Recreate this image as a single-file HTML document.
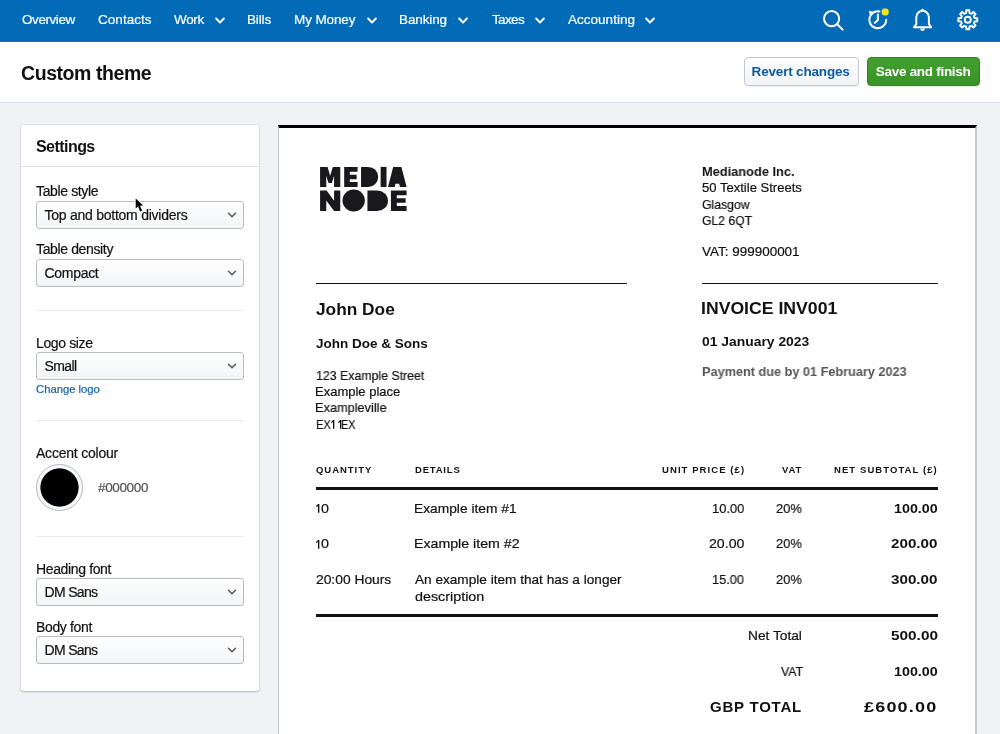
<!DOCTYPE html>
<html lang="en">
<head>
<meta charset="utf-8">
<title>Custom theme</title>
<style>
*{box-sizing:border-box;margin:0;padding:0}
html,body{width:1000px;height:734px;overflow:hidden}
body{font-family:"Liberation Sans",sans-serif;background:#f0f2f6;color:#111;position:relative;-webkit-font-smoothing:antialiased}
.abs{position:absolute;white-space:nowrap}
/* nav */
#nav{position:absolute;left:0;top:0;width:1000px;height:42.7px;background:#026bb7;border-bottom:1.3px solid #0b3e66;box-shadow:inset 0 -1px 0 #0672c2}
#nav .it{position:absolute;font-size:13.5px;line-height:16px;color:#fff;white-space:nowrap}
#nav svg{position:absolute}
/* header */
#hdr{position:absolute;left:0;top:42px;width:1000px;height:61px;background:#fff;border-bottom:1px solid #dcdfe4}
#title{left:20.5px;top:61px;font-size:19.5px;line-height:24px;font-weight:bold;color:#111;letter-spacing:-0.43px}
.btn{position:absolute;top:57px;height:28.5px;border-radius:4px;font-size:13.5px;font-weight:bold;line-height:27.5px;white-space:nowrap}
#revert{left:744.3px;width:115.4px;background:linear-gradient(#fdfdfe,#f3f4f7);border:1px solid #c3c7ce;color:#0d5a9b;letter-spacing:-0.18px;padding-left:6.6px;box-shadow:0 1px 1px rgba(0,0,0,.06)}
#save{left:867px;width:112.6px;background:linear-gradient(#429f2f,#3a9428);border:1px solid #328223;color:#fff;letter-spacing:-0.29px;padding-left:7.8px;box-shadow:0 1px 1px rgba(0,0,0,.08)}
/* settings */
#panel{position:absolute;left:21px;top:125px;width:238px;height:566px;background:#fff;border-radius:2px;box-shadow:0 1px 2px rgba(0,0,0,.22),0 0 0 1px rgba(0,0,0,.04)}
#panel h2{position:absolute;left:15px;top:11.5px;font-size:16px;line-height:20px;font-weight:bold;color:#111;letter-spacing:-0.55px}
#panel .hd{position:absolute;left:0;top:41px;width:238px;height:1px;background:#dfe1e5}
.lbl{position:absolute;left:15px;font-size:14px;line-height:16px;color:#111;white-space:nowrap;letter-spacing:-0.36px}
.sel{position:absolute;left:15px;width:208px;height:28px;border:1px solid #b9bcc2;border-radius:3px;background:linear-gradient(#fff,#f3f4f6);font-size:14px;line-height:26px;padding-left:7.5px;color:#111;white-space:nowrap;letter-spacing:-0.3px}
.sel svg{position:absolute;right:6.3px;top:10px}
.hr{position:absolute;left:15px;width:208px;height:1px;background:#e6e8eb}
#swatch{position:absolute;left:15.1px;top:339.1px;width:46.6px;height:46.6px;border-radius:50%;border:1px solid #b3b8c0;background:radial-gradient(circle closest-side,#000 0,#000 18.7px,#f7f8f9 19.5px)}
/* invoice */
#inv{position:absolute;left:278px;top:125px;width:698.5px;height:640px;background:#fff;border-top:3px solid #000;border-left:1px solid #c6cad0;border-right:2px solid #c6cad0}
#inv .t{position:absolute;white-space:nowrap;color:#111;line-height:20px;transform-origin:0 0}
#inv .t:not(.b){-webkit-text-stroke:0.2px #111}
.lbl,.sel,#nav .it{-webkit-text-stroke:0.2px}
.lbl,.sel,#nav .it,#title,.btn,#panel h2,#inv .t{will-change:transform}
.r{text-align:right}
.b{font-weight:bold}
.ln{position:absolute;background:#111}
</style>
</head>
<body>
<div id="nav">
  <div class="it" style="left:21.5px;top:11.9px;letter-spacing:-0.43px">Overview</div>
  <div class="it" style="left:98.2px;top:11.9px;letter-spacing:0.04px">Contacts</div>
  <div class="it" style="left:174.0px;top:11.9px;letter-spacing:-0.37px">Work</div>
  <div class="it" style="left:247.4px;top:11.9px;letter-spacing:-0.13px">Bills</div>
  <div class="it" style="left:294.2px;top:11.9px;letter-spacing:-0.12px">My Money</div>
  <div class="it" style="left:399.3px;top:11.9px;letter-spacing:-0.11px">Banking</div>
  <div class="it" style="left:491.5px;top:11.9px;letter-spacing:-0.65px">Taxes</div>
  <div class="it" style="left:568.3px;top:11.9px;letter-spacing:0.02px">Accounting</div>
  <svg style="left:213.5px;top:14px" width="12" height="12" viewBox="0 0 12 12"><path d="M2.1 4.5L6 8.5L9.9 4.5" fill="none" stroke="#fff" stroke-width="1.9" stroke-linecap="round" stroke-linejoin="round"/></svg>
  <svg style="left:366.0px;top:14px" width="12" height="12" viewBox="0 0 12 12"><path d="M2.1 4.5L6 8.5L9.9 4.5" fill="none" stroke="#fff" stroke-width="1.9" stroke-linecap="round" stroke-linejoin="round"/></svg>
  <svg style="left:457.4px;top:14px" width="12" height="12" viewBox="0 0 12 12"><path d="M2.1 4.5L6 8.5L9.9 4.5" fill="none" stroke="#fff" stroke-width="1.9" stroke-linecap="round" stroke-linejoin="round"/></svg>
  <svg style="left:533.5px;top:14px" width="12" height="12" viewBox="0 0 12 12"><path d="M2.1 4.5L6 8.5L9.9 4.5" fill="none" stroke="#fff" stroke-width="1.9" stroke-linecap="round" stroke-linejoin="round"/></svg>
  <svg style="left:643.8px;top:14px" width="12" height="12" viewBox="0 0 12 12"><path d="M2.1 4.5L6 8.5L9.9 4.5" fill="none" stroke="#fff" stroke-width="1.9" stroke-linecap="round" stroke-linejoin="round"/></svg>
  <svg style="left:820px;top:6px" width="28" height="28" viewBox="820 6 28 28"><circle cx="831.6" cy="18.6" r="7.6" fill="none" stroke="#fff" stroke-width="2"/><path d="M837.2 24.2L842.6 29.6" stroke="#fff" stroke-width="2" stroke-linecap="round"/></svg>
  <svg style="left:864px;top:4px" width="30" height="30" viewBox="864 4 30 30"><path d="M871.2 14.6A8.4 8.4 0 1 0 886.2 19.8" fill="none" stroke="#fff" stroke-width="2" stroke-linecap="round"/><path d="M871.4 14.3A8.4 8.4 0 0 1 879.6 11.6" fill="none" stroke="#fff" stroke-width="2" stroke-linecap="round"/><path d="M869.3 11.2L873.6 12.6L870.6 15.6Z" fill="#fff" stroke="#fff" stroke-width="1" stroke-linejoin="round"/><path d="M877.9 14.4V19.9L874.8 22.8" fill="none" stroke="#fff" stroke-width="2" stroke-linecap="round" stroke-linejoin="round"/><circle cx="885.2" cy="12" r="4.1" fill="#f3e418" stroke="#026bb7" stroke-width="1"/></svg>
  <svg style="left:908px;top:4px" width="30" height="30" viewBox="908 4 30 30"><path d="M914 27.2L916.3 24.2V17.4A6.3 6.6 0 0 1 928.9 17.4V24.2L931.2 27.2Z" fill="none" stroke="#fff" stroke-width="2" stroke-linejoin="round"/><path d="M920.2 28.6A2.4 2.4 0 0 0 925 28.6Z" fill="#fff"/><circle cx="922.6" cy="10" r="1.3" fill="#fff"/></svg>
  <svg style="left:953px;top:5px" width="30" height="30" viewBox="953 5 30 30"><path d="M966.17 12.99L966.30 10.32L969.30 10.32L969.43 12.99L971.46 13.83L973.44 12.03L975.57 14.16L973.77 16.14L974.61 18.17L977.28 18.30L977.28 21.30L974.61 21.43L973.77 23.46L975.57 25.44L973.44 27.57L971.46 25.77L969.43 26.61L969.30 29.28L966.30 29.28L966.17 26.61L964.14 25.77L962.16 27.57L960.03 25.44L961.83 23.46L960.99 21.43L958.32 21.30L958.32 18.30L960.99 18.17L961.83 16.14L960.03 14.16L962.16 12.03L964.14 13.83Z" fill="none" stroke="#fff" stroke-width="1.9" stroke-linejoin="round"/><circle cx="967.8" cy="19.8" r="3" fill="none" stroke="#fff" stroke-width="1.9"/></svg>
</div>
<div id="hdr"></div>
<div id="title" class="abs">Custom theme</div>
<div id="revert" class="btn">Revert changes</div>
<div id="save" class="btn">Save and finish</div>

<div id="panel">
  <h2>Settings</h2>
  <div class="hd"></div>
  <div class="lbl" style="top:58px">Table style</div>
  <div class="sel" style="top:75.5px;letter-spacing:-0.25px">Top and bottom dividers<svg width="10" height="7" viewBox="0 0 10 7"><path d="M1.5 1.2 L5 4.8 L8.5 1.2" fill="none" stroke="#5a5a5a" stroke-width="1.5" stroke-linecap="round" stroke-linejoin="round"/></svg></div>
  <div class="lbl" style="top:116px">Table density</div>
  <div class="sel" style="top:134px">Compact<svg width="10" height="7" viewBox="0 0 10 7"><path d="M1.5 1.2 L5 4.8 L8.5 1.2" fill="none" stroke="#5a5a5a" stroke-width="1.5" stroke-linecap="round" stroke-linejoin="round"/></svg></div>
  <div class="hr" style="top:185px"></div>
  <div class="lbl" style="top:210px">Logo size</div>
  <div class="sel" style="top:227px;letter-spacing:-0.6px">Small<svg width="10" height="7" viewBox="0 0 10 7"><path d="M1.5 1.2 L5 4.8 L8.5 1.2" fill="none" stroke="#5a5a5a" stroke-width="1.5" stroke-linecap="round" stroke-linejoin="round"/></svg></div>
  <div class="lbl" style="top:257px;font-size:11.3px;line-height:14px;color:#0b64ad;letter-spacing:-0.03px">Change logo</div>
  <div class="hr" style="top:295px"></div>
  <div class="lbl" style="top:320px;letter-spacing:-0.22px">Accent colour</div>
  <div id="swatch"></div>
  <div class="lbl" style="left:77.3px;top:355px;color:#555;font-size:13.5px">#000000</div>
  <div class="hr" style="top:411px"></div>
  <div class="lbl" style="top:436px">Heading font</div>
  <div class="sel" style="top:453px;letter-spacing:-0.66px">DM Sans<svg width="10" height="7" viewBox="0 0 10 7"><path d="M1.5 1.2 L5 4.8 L8.5 1.2" fill="none" stroke="#5a5a5a" stroke-width="1.5" stroke-linecap="round" stroke-linejoin="round"/></svg></div>
  <div class="lbl" style="top:494px">Body font</div>
  <div class="sel" style="top:511px;letter-spacing:-0.66px">DM Sans<svg width="10" height="7" viewBox="0 0 10 7"><path d="M1.5 1.2 L5 4.8 L8.5 1.2" fill="none" stroke="#5a5a5a" stroke-width="1.5" stroke-linecap="round" stroke-linejoin="round"/></svg></div>
</div>

<div id="inv">
<svg style="position:absolute;left:35px;top:34px" width="98" height="55" viewBox="0 0 1000 561"><g fill="#19191d">
<path d="M62 50H138L165 140L192 50H268V255H205V140L182 215H148L125 140V255H62Z"/>
<path d="M308 50H445V100H365V130H435V175H365V205H445V255H308Z"/>
<path d="M480 50H555A100 102.5 0 0 1 555 255H480Z"/>
<path d="M680 50H740V255H680Z"/>
<path d="M808 50H892L945 255H876L869 222H831L824 255H755Z"/>
<path d="M62 290H128L205 395V290H268V500H205L125 392V500H62Z"/>
<ellipse cx="405" cy="393" rx="114" ry="112"/>
<path d="M545 290H645A110 105 0 0 1 645 500H545Z"/>
<path d="M785 290H945V340H845V370H935V415H845V450H945V500H785Z"/>
</g></svg>
<!--ITEMS-->
  <div class="ln" style="left:37px;top:154.8px;width:311px;height:1.4px"></div>
  <div class="ln" style="left:423px;top:154.8px;width:235.6px;height:1.4px"></div>
  <div class="ln" style="left:37px;top:359px;width:622px;height:3px"></div>
  <div class="ln" style="left:37px;top:486px;width:622px;height:3px"></div>
  <svg style="position:absolute;left:37.4px;top:376.3px" width="4" height="9" viewBox="0 0 4 9"><path d="M2.0 0H3.35V8.75H2.0V1.75L0.75 3.2L0 2.35Z" fill="#111"/></svg>
  <svg style="position:absolute;left:37.4px;top:411.8px" width="4" height="9" viewBox="0 0 4 9"><path d="M2.0 0H3.35V8.75H2.0V1.75L0.75 3.2L0 2.35Z" fill="#111"/></svg>
  <svg style="position:absolute;left:52px;top:292px" width="12" height="9" viewBox="0 0 12 9"><path d="M2.0 0H3.35V8.75H2.0V1.75L0.75 3.2L0 2.35Z M9.0 0H10.35V8.75H9.0V1.75L7.75 3.2L7.0 2.35Z" fill="#111"/></svg>
  <div class="t b" style="left:423.4px;top:34.0px;font-size:13px;transform:scaleX(0.986)">Medianode Inc.</div>
  <div class="t" style="left:423.4px;top:50.2px;font-size:13px;transform:scaleX(1.004)">50 Textile Streets</div>
  <div class="t" style="left:423.4px;top:66.5px;font-size:13px;transform:scaleX(0.940)">Glasgow</div>
  <div class="t" style="left:423.4px;top:82.7px;font-size:13px;transform:scaleX(0.936)">GL2 6QT</div>
  <div class="t" style="left:423.4px;top:113.6px;font-size:13px;transform:scaleX(1.036)">VAT: 999900001</div>
  <div class="t b" style="left:37.3px;top:171.1px;font-size:16.5px;transform:scaleX(1.048)">John Doe</div>
  <div class="t b" style="left:37.3px;top:206.2px;font-size:13.5px;transform:scaleX(0.996)">John Doe &amp; Sons</div>
  <div class="t" style="left:37.3px;top:237.9px;font-size:13px;transform:scaleX(0.949)">123 Example Street</div>
  <div class="t" style="left:36.3px;top:253.9px;font-size:13px;transform:scaleX(0.996)">Example place</div>
  <div class="t" style="left:36.3px;top:270.1px;font-size:13px;transform:scaleX(0.981)">Exampleville</div>
  <div class="t" style="left:36.8px;top:287.0px;font-size:13px;transform:scaleX(0.846)">EX</div>
  <div class="t" style="left:62.3px;top:287.0px;font-size:13px;transform:scaleX(0.828)">EX</div>
  <div class="t b" style="left:422.1px;top:170.1px;font-size:16.5px;transform:scaleX(1.069)">INVOICE INV001</div>
  <div class="t b" style="left:423.2px;top:204.1px;font-size:13.5px;transform:scaleX(1.028)">01 January 2023</div>
  <div class="t b" style="left:423.2px;top:234.4px;font-size:13px;transform:scaleX(0.977);color:#555">Payment due by 01 February 2023</div>
  <div class="t b" style="left:37.4px;top:331.6px;font-size:9.5px;letter-spacing:0.97px">QUANTITY</div>
  <div class="t b" style="left:135.8px;top:331.6px;font-size:9.5px;letter-spacing:0.80px">DETAILS</div>
  <div class="t b" style="left:383.0px;top:331.6px;font-size:9.5px;letter-spacing:1.08px">UNIT PRICE (£)</div>
  <div class="t b" style="left:503.0px;top:331.6px;font-size:9.5px;letter-spacing:0.86px">VAT</div>
  <div class="t b" style="left:554.9px;top:331.6px;font-size:9.5px;letter-spacing:1.08px">NET SUBTOTAL (£)</div>
  <div class="t" style="left:42.0px;top:370.9px;font-size:13px;transform:scaleX(1.100)">0</div>
  <div class="t" style="left:134.7px;top:370.9px;font-size:13px;transform:scaleX(1.059)">Example item #1</div>
  <div class="t" style="left:433.1px;top:370.9px;font-size:13px;transform:scaleX(0.994)">10.00</div>
  <div class="t" style="left:497.0px;top:370.9px;font-size:13px;transform:scaleX(0.990)">20%</div>
  <div class="t b" style="left:614.7px;top:370.9px;font-size:13px;transform:scaleX(1.100)">100.00</div>
  <div class="t" style="left:42.0px;top:406.4px;font-size:13px;transform:scaleX(1.100)">0</div>
  <div class="t" style="left:134.7px;top:406.4px;font-size:13px;transform:scaleX(1.090)">Example item #2</div>
  <div class="t" style="left:430.1px;top:406.4px;font-size:13px;transform:scaleX(1.087)">20.00</div>
  <div class="t" style="left:497.0px;top:406.4px;font-size:13px;transform:scaleX(0.990)">20%</div>
  <div class="t b" style="left:612.0px;top:406.4px;font-size:13px;transform:scaleX(1.169)">200.00</div>
  <div class="t" style="left:37.4px;top:442.2px;font-size:13px;transform:scaleX(1.063)">20:00 Hours</div>
  <div class="t" style="left:135.8px;top:442.2px;font-size:13px;transform:scaleX(1.047)">An example item that has a longer</div>
  <div class="t" style="left:135.8px;top:458.6px;font-size:13px;transform:scaleX(1.102)">description</div>
  <div class="t" style="left:433.4px;top:442.2px;font-size:13px;transform:scaleX(0.984)">15.00</div>
  <div class="t" style="left:497.0px;top:442.2px;font-size:13px;transform:scaleX(0.990)">20%</div>
  <div class="t b" style="left:612.0px;top:442.2px;font-size:13px;transform:scaleX(1.169)">300.00</div>
  <div class="t" style="left:469.2px;top:498.0px;font-size:13px;transform:scaleX(1.055)">Net Total</div>
  <div class="t b" style="left:611.5px;top:498.0px;font-size:13px;transform:scaleX(1.181)">500.00</div>
  <div class="t" style="left:501.5px;top:533.8px;font-size:13px;transform:scaleX(0.940)">VAT</div>
  <div class="t b" style="left:614.8px;top:533.8px;font-size:13px;transform:scaleX(1.098)">100.00</div>
  <div class="t b" style="left:430.5px;top:569.1px;font-size:15px;letter-spacing:0.77px">GBP TOTAL</div>
  <div class="t b" style="left:584.8px;top:569.1px;font-size:15px;letter-spacing:0.99px;transform:scaleX(1.2)">£600.00</div>
<!--/ITEMS-->
</div>
<svg style="position:absolute;left:130px;top:194px" width="20" height="22" viewBox="130 194 20 22"><path d="M135.7 198.5V208.5L138.1 206.3L140.1 211.5L142.1 210.7L140 205.8L143.2 205.6Z" fill="#000" stroke="#fff" stroke-width="1.8" stroke-linejoin="round" style="paint-order:stroke"/></svg>
</body>
</html>
